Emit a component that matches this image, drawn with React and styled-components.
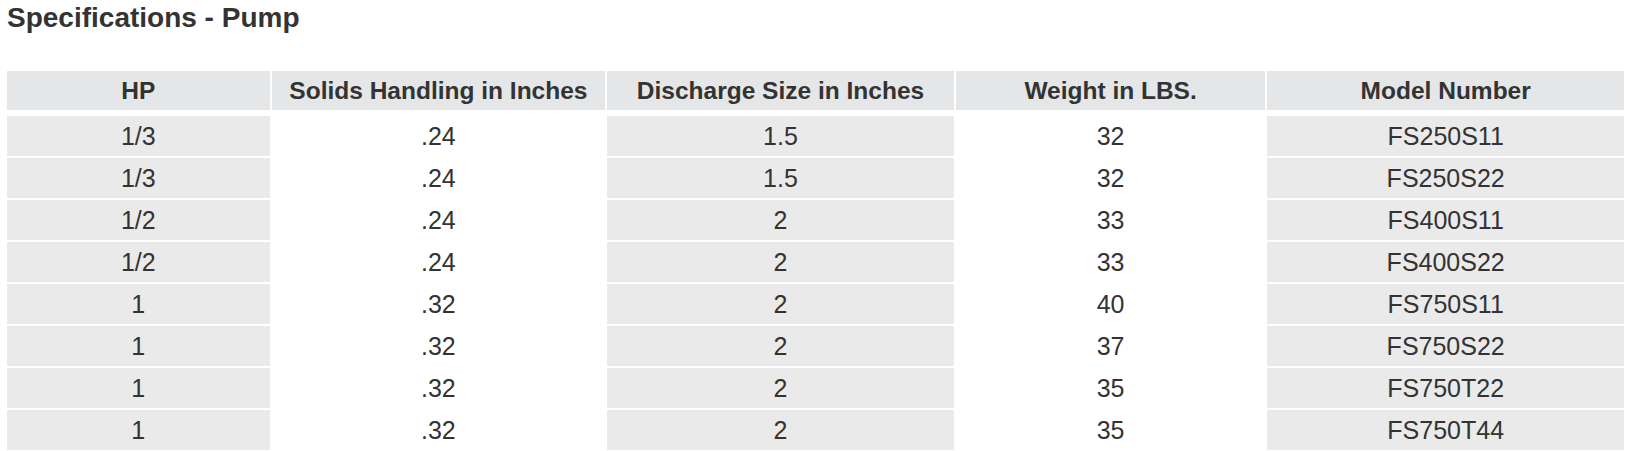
import React from 'react';
import styled, { createGlobalStyle } from 'styled-components';

const GlobalStyle = createGlobalStyle`
  html, body {
    margin: 0;
    padding: 0;
    background: #fff;
    overflow: hidden;
  }
  body {
    font-family: "Liberation Sans", Arial, sans-serif;
    color: #333;
  }
`;

const Page = styled.div`
  padding: 2px 0 0 7px;
`;

const Title = styled.h2`
  margin: 0;
  font-size: 28px;
  font-weight: 700;
  color: #333;
  line-height: 32px;
`;

const SpecTable = styled.table`
  margin: 35px 0 0 -2px;
  border-collapse: separate;
  border-spacing: 2px;
  table-layout: fixed;
`;

const HeadCell = styled.th`
  height: 39px;
  padding: 0;
  background: #e5e6e7;
  border-bottom: 4px solid #fff;
  font-size: 24.5px;
  font-weight: 700;
  color: #333;
  text-align: center;
  vertical-align: middle;
`;

const Cell = styled.td`
  height: 40px;
  padding: 0;
  background: ${({ $shaded }) => ($shaded ? '#eaeaea' : 'transparent')};
  font-size: 25px;
  color: #333;
  text-align: center;
  vertical-align: middle;
`;

const columns = [
  { label: 'HP', width: 263 },
  { label: 'Solids Handling in Inches', width: 334 },
  { label: 'Discharge Size in Inches', width: 347 },
  { label: 'Weight in LBS.', width: 310 },
  { label: 'Model Number', width: 357 },
];

const rows = [
  ['1/3', '.24', '1.5', '32', 'FS250S11'],
  ['1/3', '.24', '1.5', '32', 'FS250S22'],
  ['1/2', '.24', '2', '33', 'FS400S11'],
  ['1/2', '.24', '2', '33', 'FS400S22'],
  ['1', '.32', '2', '40', 'FS750S11'],
  ['1', '.32', '2', '37', 'FS750S22'],
  ['1', '.32', '2', '35', 'FS750T22'],
  ['1', '.32', '2', '35', 'FS750T44'],
];

const App = () => (
  <>
    <GlobalStyle />
    <Page>
      <Title>Specifications - Pump</Title>
      <SpecTable>
        <colgroup>
          {columns.map((col) => (
            <col key={col.label} style={{ width: col.width }} />
          ))}
        </colgroup>
        <thead>
          <tr>
            {columns.map((col) => (
              <HeadCell key={col.label}>{col.label}</HeadCell>
            ))}
          </tr>
        </thead>
        <tbody>
          {rows.map((row, i) => (
            <tr key={row[4] + i}>
              {row.map((value, j) => (
                <Cell key={j} $shaded={j % 2 === 0}>
                  {value}
                </Cell>
              ))}
            </tr>
          ))}
        </tbody>
      </SpecTable>
    </Page>
  </>
);

export default App;
